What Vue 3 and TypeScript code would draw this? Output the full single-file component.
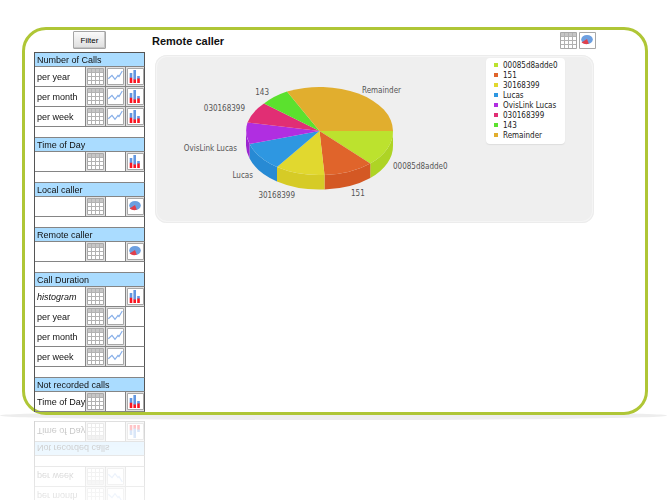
<script setup lang="ts">
import { computed, defineComponent, h } from 'vue'

type IconKind = 'grid' | 'line' | 'bars' | 'pie'

interface ReportRow {
  label: string
  italic?: boolean
  icons: (IconKind | null)[]
}

interface ReportGroup {
  title: string
  rows: ReportRow[]
}

interface Slice {
  name: string
  top: string
  side: string
  end: [number, number]
  label: [number, number]
  anchor: 'start' | 'end'
}

const groups: ReportGroup[] = [
  {
    title: 'Number of Calls',
    rows: [
      { label: 'per year', icons: ['grid', 'line', 'bars'] },
      { label: 'per month', icons: ['grid', 'line', 'bars'] },
      { label: 'per week', icons: ['grid', 'line', 'bars'] },
    ],
  },
  { title: 'Time of Day', rows: [{ label: '', icons: ['grid', null, 'bars'] }] },
  { title: 'Local caller', rows: [{ label: '', icons: ['grid', null, 'pie'] }] },
  { title: 'Remote caller', rows: [{ label: '', icons: ['grid', null, 'pie'] }] },
  {
    title: 'Call Duration',
    rows: [
      { label: 'histogram', italic: true, icons: ['grid', null, 'bars'] },
      { label: 'per year', icons: ['grid', 'line', null] },
      { label: 'per month', icons: ['grid', 'line', null] },
      { label: 'per week', icons: ['grid', 'line', null] },
    ],
  },
  { title: 'Not recorded calls', rows: [{ label: 'Time of Day', icons: ['grid', null, 'bars'] }] },
]

const iconNames: Record<IconKind, string> = {
  grid: 'Table',
  line: 'Line chart',
  bars: 'Bar chart',
  pie: 'Pie chart',
}

const ChartIcon = defineComponent({
  props: { kind: { type: String, required: true } },
  setup(props) {
    const path = (d: string, attrs: Record<string, string> = {}) => h('path', { d, ...attrs })
    const shapes = () => {
      switch (props.kind) {
        case 'grid':
          return [
            path('M1 1h15v3H1z', { fill: '#c6c6c6' }),
            path('M1 4.5h15M1 8.5h15M1 12.5h15M4.5 1v15M8.5 1v15M12.5 1v15', { fill: 'none', stroke: '#b2b2b2' }),
          ]
        case 'line':
          return [
            path('M1.3 10.7L5 7.3L8 11.3L11 7.5L12 8.5L15.3 3', {
              fill: 'none',
              stroke: '#86aee8',
              'stroke-width': '1.2',
            }),
          ]
        case 'bars':
          return [
            path('M2.7 5h2.6v5H2.7zM6.4 2h2.6v10H6.4zM10.2 8h2.6v3h-2.6z', { fill: '#6298e2' }),
            path('M2.7 9.7h2.6V15H2.7zM6.4 11.5h2.6V15H6.4zM10.2 10.5h2.6V15h-2.6z', { fill: '#fa1420' }),
          ]
        default:
          return [
            h('ellipse', { cx: '8', cy: '7.5', rx: '5.8', ry: '4.5', fill: '#6c9fe0' }),
            path('M8 7L9.8 11.8Q6 13 2.5 10.5Z', { fill: '#e0404c' }),
          ]
      }
    }
    return () =>
      h('svg', { viewBox: '0 0 17 17', width: 17, height: 17, 'aria-hidden': 'true' }, [
        path('M.5 .5h16v16H.5z', { fill: '#fff', stroke: '#a8a8a8' }),
        ...shapes(),
      ])
  },
})

// Pie geometry, in chart units
const cx = 164.5
const cy = 76
const rx = 73.5
const ry = 44
const depth = 14.5

const slices: Slice[] = [
  { name: '00085d8adde0', top: '#bce22e', side: '#aed425', end: [215.3, 108.5], label: [238, 114], anchor: 'start' },
  { name: '151', top: '#e0642b', side: '#d45824', end: [169.5, 120], label: [196, 141], anchor: 'start' },
  { name: '30168399', top: '#e1d82f', side: '#d6cb26', end: [122, 112], label: [140, 143], anchor: 'end' },
  { name: 'Lucas', top: '#2e97e1', side: '#278ad4', end: [94.6, 89], label: [98, 123], anchor: 'end' },
  { name: 'OvisLink Lucas', top: '#b02ee1', side: '#9c25d0', end: [92.5, 67.5], label: [82, 96], anchor: 'end' },
  { name: '030168399', top: '#e12e74', side: '#c92566', end: [109, 48.5], label: [90, 56], anchor: 'end' },
  { name: '143', top: '#5be12e', side: '#4fca26', end: [132, 36.5], label: [114, 40], anchor: 'end' },
  { name: 'Remainder', top: '#e1ae2e', side: '#cf9f26', end: [238, 76], label: [207, 38], anchor: 'start' },
]

const wedges = computed(() =>
  slices.map((slice, i) => {
    const [x1, y1] = i === 0 ? [cx + rx, cy] : slices[i - 1].end
    const [x2, y2] = slice.end
    const topPath = `M${cx} ${cy}L${x1} ${y1}A${rx} ${ry} 0 0 1 ${x2} ${y2}Z`
    // The wall is visible only on the front half of the disc
    let wall = ''
    if (y1 >= cy) {
      const [ex, ey] = y2 >= cy ? [x2, y2] : [cx - rx, cy]
      wall = `M${x1} ${y1}A${rx} ${ry} 0 0 1 ${ex} ${ey}V${ey + depth}A${rx} ${ry} 0 0 0 ${x1} ${y1 + depth}Z`
    }
    return { ...slice, topPath, wall }
  }),
)
</script>

<template>
  <div class="page">
    <div class="ground"></div>
    <main class="frame">
      <nav class="sidebar">
        <button type="button" class="filter">Filter</button>
        <table class="reports">
          <colgroup>
            <col />
            <col class="icon-col" />
            <col class="icon-col" />
            <col class="last-col" />
          </colgroup>
          <tbody v-for="(group, g) in groups" :key="group.title">
            <tr class="head">
              <th colspan="4" scope="colgroup">{{ group.title }}</th>
            </tr>
            <tr v-for="(row, r) in group.rows" :key="r" class="row">
              <td :class="{ italic: row.italic }">{{ row.label }}</td>
              <td v-for="(icon, c) in row.icons" :key="c" :class="{ filled: icon }">
                <a v-if="icon" href="#" :aria-label="`${group.title} ${row.label} ${iconNames[icon]}`">
                  <ChartIcon :kind="icon" />
                </a>
              </td>
            </tr>
            <tr v-if="g < groups.length - 1" class="spacer">
              <td colspan="4"></td>
            </tr>
          </tbody>
        </table>
      </nav>

      <section class="content">
        <header class="bar">
          <h1>Remote caller</h1>
          <a href="#" aria-label="Table"><ChartIcon kind="grid" /></a>
          <a href="#" aria-label="Pie chart"><ChartIcon kind="pie" /></a>
        </header>
        <div class="panel">
          <svg class="chart" viewBox="0 0 439 168" role="img" aria-label="Remote caller">
            <path v-for="w in wedges" :key="`wall-${w.name}`" :d="w.wall" :fill="w.side" />
            <path v-for="w in wedges" :key="`top-${w.name}`" :d="w.topPath" :fill="w.top" />
            <text
              v-for="w in wedges"
              :key="`text-${w.name}`"
              :x="w.label[0]"
              :y="w.label[1]"
              :text-anchor="w.anchor"
            >{{ w.name }}</text>
          </svg>
          <ul class="legend">
            <li v-for="s in slices" :key="s.name">
              <span class="swatch" :style="{ background: s.top }"></span>{{ s.name }}
            </li>
          </ul>
        </div>
      </section>
    </main>
  </div>
</template>

<style>
body {
  background: #fff;
  overflow: hidden;
}
</style>

<style scoped>
.page {
  position: relative;
  padding: 27px 19px 85px 22px;
  font-family: "Liberation Sans", Arial, sans-serif;
  color: #111;
}

.ground {
  position: absolute;
  left: 0;
  right: 0;
  bottom: 80px;
  height: 9px;
  border-radius: 50%;
  background: #ededed;
}

.frame {
  position: relative;
  display: flex;
  align-items: flex-start;
  gap: 7px;
  padding: 1px 49px 0 9px;
  border: 3px solid #afc636;
  border-radius: 24px;
  background: #fff;
}

.sidebar {
  display: flex;
  flex-direction: column;
  align-items: center;
  gap: 3px;
  width: 111px;
  flex: none;
}

.filter {
  height: 18px;
  padding: 0 7px;
  border: 1px solid #a5a5a5;
  border-radius: 1px;
  background: linear-gradient(#fafafa, #dedede);
  box-shadow: inset -1px -1px 0 #c4c4c4;
  font: 8px "Liberation Sans", Arial, sans-serif;
  color: #000;
}

.reports {
  width: 100%;
  table-layout: fixed;
  border-collapse: separate;
  border-spacing: 0;
  border: 1px solid #555;
  border-width: 1px 0 0 1px;
  -webkit-box-reflect: below 9px linear-gradient(transparent 70%, rgba(0, 0, 0, 0.1) 75%, rgba(0, 0, 0, 0.26));
}

.icon-col {
  width: 20px;
}

.last-col {
  width: 19px;
}

th,
td {
  box-sizing: border-box;
  padding: 0 0 0 2px;
  border-right: 1px solid #858585;
  border-bottom: 1px solid #858585;
  font-size: 9px;
  line-height: 10px;
  font-weight: normal;
  text-align: left;
  white-space: nowrap;
}

th:last-child,
td:last-child {
  border-right-color: #555;
}

.head th {
  height: 14px;
  background: #aadcff;
}

.row td {
  height: 20px;
}

.spacer td {
  height: 11px;
}

.row td.filled {
  padding: 1px 0 1px 1px;
  background: #e2e2e2;
}

.italic {
  font-style: italic;
}

a,
a svg {
  display: block;
}

.content {
  flex: 1;
  min-width: 0;
}

.bar {
  display: flex;
  align-items: center;
  gap: 2px;
  height: 19px;
}

h1 {
  flex: 1;
  margin: 0;
  font-size: 11px;
  line-height: 14px;
}

.panel {
  position: relative;
  margin: 5px 2px 0 3px;
  border-radius: 12px;
  background: #efefef;
  box-shadow: inset 0 0 0 1px #ececec, inset 0 0 0 2px #f5f5f5;
}

.chart {
  display: block;
  width: 100%;
}

.chart text,
.legend {
  font-family: "DejaVu Sans Condensed", "DejaVu Sans", sans-serif;
  font-size: 8px;
}

.chart text {
  fill: #555;
}

.legend {
  position: absolute;
  top: 3px;
  right: 29px;
  width: 79px;
  box-sizing: border-box;
  margin: 0;
  padding: 2px 7px 4px 8px;
  border-radius: 4px;
  background: #fff;
  box-shadow: 0 1px 1px #ddd;
  list-style: none;
  color: #222;
}

.legend li {
  display: flex;
  align-items: center;
  gap: 5px;
  height: 10px;
  white-space: nowrap;
}

.swatch {
  width: 4px;
  height: 4px;
}
</style>
